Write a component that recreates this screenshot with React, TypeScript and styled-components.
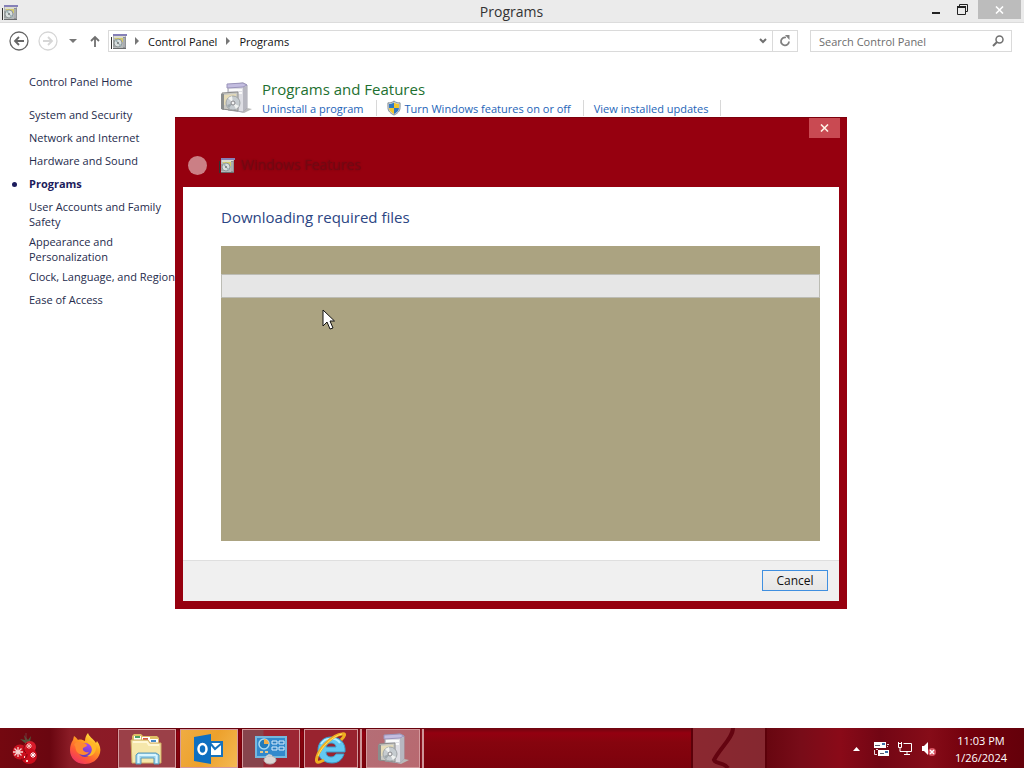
import React from "react";
import styled, { createGlobalStyle, css } from "styled-components";

const GlobalStyle = createGlobalStyle`
  * { box-sizing: border-box; }
  body {
    margin: 0;
    background: #ffffff;
    font-family: "Open Sans", "Noto Sans", sans-serif;
    font-size: 11px;
    line-height: 15px;
    color: #1e1e1e;
  }
  button, input { font: inherit; color: inherit; }
  button { padding: 0; border: 0; background: none; }
  a { text-decoration: none; color: inherit; }
  svg { display: block; flex: none; }
`;

const Desktop = styled.div`
  position: relative;
  min-height: 100vh;
  display: flex;
  flex-direction: column;
  overflow: hidden;
`;

const TitleBar = styled.header`
  display: flex;
  align-items: flex-start;
  height: 23px;
  padding-left: 2px;
  background: #ebebeb;
  border-bottom: 1px solid #dcdcdc;
`;

const TitleIcon = styled.div`
  flex: 1;
  padding-top: 4px;
`;

const WindowTitle = styled.h1`
  margin: 0;
  font-size: 14px;
  line-height: 23px;
  font-weight: 400;
  color: #333333;
`;

const WindowButtons = styled.div`
  flex: 1;
  display: flex;
  justify-content: flex-end;
  padding-right: 3px;
`;

const WindowButton = styled.button<{ $close?: boolean }>`
  display: flex;
  align-items: center;
  justify-content: center;
  width: ${(p) => (p.$close ? 43 : 26)}px;
  height: 19px;
  background: ${(p) => (p.$close ? "#bcbcbc" : "transparent")};
  margin-left: ${(p) => (p.$close ? 3 : 0)}px;
`;

const AddressBar = styled.nav`
  display: flex;
  align-items: center;
  height: 36px;
  padding: 0 12px 0 9px;
`;

const NavButton = styled.button<{ $width: number }>`
  display: flex;
  align-items: center;
  justify-content: center;
  width: ${(p) => p.$width}px;
  height: 22px;
`;

const UpButton = styled(NavButton)`
  padding-left: 4px;
`;

const PathBox = styled.div`
  flex: 1;
  display: flex;
  align-items: center;
  height: 22px;
  padding-left: 2px;
  border: 1px solid #dadada;
`;

const PathArrow = styled.span`
  margin-left: 8px;
`;

const Crumb = styled.a`
  padding: 0 9px 0 8px;
  color: #111111;
`;

const PathTools = styled.div`
  display: flex;
  margin-left: auto;
`;

const PathButton = styled.button`
  display: flex;
  align-items: center;
  justify-content: center;
  width: 25px;
  height: 20px;
  & + & { border-left: 1px solid #dadada; }
  &:first-child { width: 19px; }
`;

const SearchBox = styled.label`
  display: flex;
  align-items: center;
  width: 202px;
  height: 22px;
  margin-left: 12px;
  padding: 0 7px 0 8px;
  border: 1px solid #dadada;
`;

const SearchInput = styled.input`
  flex: 1;
  min-width: 0;
  padding: 0;
  border: 0;
  outline: 0;
  background: none;
  &::placeholder { color: #6d6d6d; opacity: 1; }
`;

const Content = styled.div`
  flex: 1;
  display: flex;
  padding-top: 15px;
`;

const Sidebar = styled.nav`
  width: 220px;
  padding-left: 29px;
  color: #252b4c;
`;

const HomeLink = styled.a`
  display: block;
  margin-bottom: 18px;
`;

const CategoryList = styled.ul`
  list-style: none;
  margin: 0;
  padding: 0;
`;

const Category = styled.li<{ $current?: boolean }>`
  display: flex;
  min-height: 23px;
  padding-bottom: 5px;
  white-space: nowrap;
  ${(p) =>
    p.$current &&
    css`
      margin-left: -17px;
      font-weight: 700;
      color: #1c1c5c;
      &::before {
        content: "";
        width: 5px;
        height: 5px;
        margin: 6px 12px 0 0;
        border-radius: 50%;
        background: currentColor;
      }
    `}
`;

const Main = styled.main`
  flex: 1;
  display: flex;
  align-items: flex-start;
  gap: 10px;
`;

const GroupIcon = styled.div`
  padding-top: 8px;
`;

const GroupTitle = styled.h2`
  margin: 6px 0 2px;
  font-size: 15px;
  line-height: 18px;
  font-weight: 400;
  color: #1e7030;
`;

const TaskLinks = styled.div`
  display: flex;
  align-items: center;
  color: #2464b8;
`;

const TaskLink = styled.a`
  display: flex;
  align-items: center;
  gap: 4px;
  height: 16px;
  padding-right: 12px;
  margin-right: 10px;
  border-right: 1px solid #d8d8d8;
  white-space: nowrap;
`;

const DialogLayer = styled.div`
  position: absolute;
  top: 117px;
  left: 0;
  right: 2px;
  display: flex;
  justify-content: center;
`;

const Dialog = styled.section`
  width: 672px;
  max-width: 100%;
  padding: 0 8px 8px;
  background: #96000f;
  border-top: 1px solid #7c000c;
`;

const DialogHeader = styled.header`
  display: flex;
  flex-direction: column;
  height: 69px;
`;

const DialogClose = styled.button`
  display: flex;
  align-items: center;
  justify-content: center;
  align-self: flex-end;
  width: 31px;
  height: 20px;
  margin-right: -1px;
  background: #c94a52;
`;

const DialogTitleRow = styled.div`
  display: flex;
  align-items: center;
  height: 20px;
  margin-top: 17px;
  padding-left: 5px;
`;

const DialogBack = styled.button`
  width: 19px;
  height: 19px;
  margin-right: 12px;
  border-radius: 50%;
  background: #cb7f85;
`;

const DialogTitle = styled.h2`
  margin: 0 0 0 6px;
  font-size: 14px;
  line-height: 20px;
  font-weight: 400;
  color: #740812;
  text-shadow: 0 0 2px #6c0410;
`;

const DialogBody = styled.div`
  padding: 19px 19px 19px 38px;
  background: #ffffff;
`;

const DialogHeading = styled.h3`
  margin: 0 0 18px;
  font-size: 15px;
  line-height: 22px;
  font-weight: 400;
  color: #2b4583;
`;

const ProgressPanel = styled.div`
  height: 295px;
  padding-top: 28px;
  background: #aba381;
`;

const ProgressTrack = styled.div`
  height: 24px;
  border: 1px solid #bcbcb4;
  background: #e6e6e6;
`;

const DialogFooter = styled.footer`
  display: flex;
  justify-content: flex-end;
  padding: 9px 11px 10px;
  border-top: 1px solid #dfdfdf;
  background: #f0f0f0;
`;

const CancelButton = styled.button`
  width: 66px;
  height: 21px;
  border: 1px solid #3f8fe0;
  background: linear-gradient(#f0f0f0, #e6e6e6);
  font-size: 12px;
  color: #111111;
`;

const Pointer = styled.div`
  position: absolute;
  left: 322px;
  top: 309px;
`;

const Taskbar = styled.footer`
  position: relative;
  display: flex;
  height: 40px;
  background:
    linear-gradient(90deg, #740810, #6a0610 50px, #8a1c26 70px, #8c1a26 120px, transparent 120px),
    linear-gradient(90deg, transparent 692px, #8b2830 693px, #852830 766px, #680610 767px, #780c18 800px, #8a0a18 840px, #720614 880px, #860c18 930px, #72000c 970px, #64000a 100%),
    linear-gradient(#6c0610 0, #940010 5px, #86040e 14px, #7c020c 100%);
`;

const TaskArt = styled.div`
  position: absolute;
  left: 690px;
  top: 0;
`;

const TaskButton = styled.button<{ $width: number; $tone?: string; $stacked?: boolean }>`
  display: flex;
  align-items: center;
  justify-content: center;
  width: ${(p) => p.$width}px;
  height: 39px;
  margin: 1px ${(p) => (p.$stacked ? 8 : 4)}px 0 0;
  ${(p) =>
    p.$tone &&
    css`
      border: 1px solid #d49a9e;
      outline: 1px solid #5c000860;
      background: ${p.$tone};
    `}
  ${(p) =>
    p.$stacked &&
    css`
      box-shadow: 2px 0 0 #8c1420, 4px 0 0 #cf9598;
    `}
`;

const Tray = styled.div`
  position: relative;
  display: flex;
  align-items: center;
  gap: 8px;
  margin-left: auto;
  padding: 2px 17px 0 0;
  color: #ffffff;
`;

const TrayIcons = styled.div`
  display: flex;
  gap: 8px;
  margin-left: 5px;
`;

const Clock = styled.time`
  margin-left: 10px;
  line-height: 17px;
  text-align: center;
  white-space: nowrap;
`;

const ProgramIcon = () => (
  <svg width="32" height="32" viewBox="0 0 32 32" aria-hidden="true">
    <path d="M27 26l5 1-8 4-4-1z" fill="#b9b9b9" />
    <path d="M8 3l15-2 4 2v23l-4 4-15-2z" fill="#dedee4" stroke="#a3a3ad" />
    <path d="M23 5l4-1v22l-4 4z" fill="#b7b7c0" />
    <path d="M7 2l16-1 4 2-4 2-16 1z" fill="#c3bde0" stroke="#9a94ba" />
    <path d="M9 8h13M9 11h13" stroke="#fafafa" strokeWidth="2" />
    <path d="M2 11l16-1v19L2 27z" fill="#cacac4" stroke="#8a8a8a" />
    <path d="M4 13l12-1v8L4 23z" fill="#e6dcb8" />
    <circle cx="13" cy="21" r="7" fill="#c6ccd0" stroke="#a0a5a8" />
    <path d="M13 21l-5-5 4-2zM13 21l6 3-3 3z" fill="#f1f3f1" />
    <path d="M13 21l-6 2 2 3z" fill="#9fa8ac" />
    <circle cx="13" cy="21" r="2" fill="#f4f4f4" stroke="#87878b" />
    <path d="M1 12v15l3 1V12z" fill="#8a8d8d" />
  </svg>
);

const SmallProgramIcon = () => (
  <svg width="16" height="16" viewBox="0 0 16 16" aria-hidden="true">
    <path d="M2 1h13v14H2z" fill="#b6b9ba" />
    <path d="M2 1h14v2H2z" fill="#8580b8" />
    <path d="M3 3h11v2H3z" fill="#dcdccf" />
    <path d="M4 5h8v4H4z" fill="#d3cb6a" />
    <path d="M2 7h3v7H2z" fill="#9ba0a0" />
    <circle cx="7" cy="10" r="4" fill="#d9dfdf" stroke="#8e9596" />
    <path d="M7 10l4 2-2 2zM7 10L4 8l2-2z" fill="#9fb4b8" />
    <circle cx="7" cy="10" r="1" fill="#6d7272" />
    <path d="M12 4h3v11h-3z" fill="#8f9296" />
    <path d="M13 5v9" stroke="#c8cacc" />
    <path d="M2 15.500h13" stroke="#6a6c6e" />
    <path d="M0.500 4v12" stroke="#333333" />
  </svg>
);

const CrumbArrow = () => (
  <svg width="5" height="8" viewBox="0 0 5 8" aria-hidden="true">
    <path d="M0 0l4 4-4 4z" fill="#777777" />
  </svg>
);

const CloseGlyph = ({ color }: { color: string }) => (
  <svg width="9" height="8" viewBox="0 0 9 8" aria-hidden="true">
    <path d="M1 0.500l7 7M8 0.500l-7 7" stroke={color} strokeWidth="1.600" />
  </svg>
);

const RoundArrow = ({ color, flip }: { color: string; flip?: boolean }) => (
  <svg width="20" height="20" viewBox="0 0 20 20" fill="none" stroke={color} aria-hidden="true">
    <circle cx="10" cy="10" r="9" strokeWidth="1.300" />
    <path
      d={flip ? "M5 10h9M10 6l4 4-4 4" : "M15 10H6M10 6l-4 4 4 4"}
      strokeWidth="1.800"
    />
  </svg>
);

const Shield = () => (
  <svg width="14" height="16" viewBox="0 0 15 16" aria-hidden="true">
    <path d="M7.500 0.500C5 2.500 3 2.500 1 2.500v5c0 4 3 6.500 6.500 8 3.500-1.500 6.500-4 6.500-8v-5c-2 0-4 0-6.500-2z" fill="#cfd5da" stroke="#7f8a92" />
    <path d="M7.500 2C5.500 3.500 4 3.800 2.200 3.800V8h5.300z" fill="#2e76c4" />
    <path d="M7.500 2c2 1.500 3.500 1.800 5.300 1.800V8H7.500z" fill="#f2c62f" />
    <path d="M2.200 8h5.300v6.300C4.500 12.800 2.400 11 2.200 8z" fill="#f2c62f" />
    <path d="M7.500 8h5.300c-0.200 3-2.300 4.800-5.300 6.300z" fill="#2e76c4" />
  </svg>
);

const Ornament = () => (
  <svg width="30" height="36" viewBox="0 0 30 36" aria-hidden="true">
    <path d="M14 12l-5-4 5 1-1-5 4 5 3-4-1 6 3-1-5 4z" fill="#4d5a3c" />
    <path d="M15 2v9" stroke="#75343a" />
    <circle cx="9" cy="21" r="7.500" fill="#c9121f" />
    <circle cx="19" cy="16" r="6" fill="#d81c2b" />
    <circle cx="18" cy="25" r="8" fill="#cb0d1b" />
    <path d="M16 12c-4 3-4 8-1 10M10 28c3 1 6-1 6-5" stroke="#7e0610" fill="none" />
    <path d="M7 16v10M2 21h10M3.500 17.500l7 7M10.500 17.500l-7 7" stroke="#f6d5d2" strokeWidth="1.300" />
    <path d="M18 12v6M15 15h6M16 13l4 4M20 13l-4 4" stroke="#f4c2bc" />
    <path d="M22 21v6M19 24h6M20 22l4 4M24 22l-4 4" stroke="#ffffff" />
    <path d="M15 30h2M13 26h1" stroke="#f7d5d0" strokeWidth="2" />
  </svg>
);

const Firefox = () => (
  <svg width="32" height="34" viewBox="0 0 32 34" aria-hidden="true">
    <defs>
      <linearGradient id="fox" x1="0.850" y1="0" x2="0.200" y2="1">
        <stop offset="0" stopColor="#fff44f" />
        <stop offset="0.350" stopColor="#ffa71e" />
        <stop offset="0.700" stopColor="#ff5a35" />
        <stop offset="1" stopColor="#ee2f6a" />
      </linearGradient>
      <linearGradient id="foxglobe" x1="0.700" y1="0" x2="0.300" y2="1">
        <stop offset="0" stopColor="#a949f2" />
        <stop offset="1" stopColor="#5b3bb8" />
      </linearGradient>
    </defs>
    <path d="M19 1c1 4 5 5 8 10l1-2c3 4 4 8 3 12-2 7-8 11-15 11C7 32 1 26 1 18c0-4 1-7 3-10l1-4c2 1 3 3 4 4 2-1 5 0 7 1 0-3 1-6 3-8z" fill="url(#fox)" />
    <circle cx="16" cy="18" r="7" fill="url(#foxglobe)" />
    <path d="M5 13c2-4 6-4 9-2 2 0 4 1 4 3l-4 2c-1 3 3 5 6 4-2 4-9 4-12 0-2-3-1-6-3-7z" fill="#ff8a30" />
    <path d="M18 8c-1 3 5 4 5 9 0 3-2 6-5 7 5 1 9-3 9-8 0-5-4-7-9-8z" fill="#ffb728" />
  </svg>
);

const Explorer = () => (
  <svg width="34" height="32" viewBox="0 0 34 32" aria-hidden="true">
    <path d="M2 3l2-2h7l2 2h14l2 2v23H3z" fill="#dfbd65" />
    <path d="M4 3h7v5H4z" fill="#fdfdfd" />
    <path d="M5 3h5v2H5z" fill="#4d9f62" />
    <path d="M12 4h8v6h-8z" fill="#ffffff" />
    <path d="M13 5h5v2h-5z" fill="#d85745" />
    <path d="M20 6h8v6h-8z" fill="#ffffff" />
    <path d="M21 7h5v2h-5z" fill="#4789c7" />
    <path d="M1 7h17l2 3h11v20H2z" fill="#f5e7ab" stroke="#d0ae62" />
    <path d="M3 9h14l2 3h10" fill="none" stroke="#fff7d4" strokeWidth="2" />
    <path d="M6 31V22l2-2h18l3 2v9h-5v-6H11v6z" fill="#9bd3ec" stroke="#5b9aba" />
    <path d="M8 22h18M8.500 22v8M26.500 22v8" stroke="#d9f5ff" strokeWidth="2" />
  </svg>
);

const Outlook = () => (
  <svg width="32" height="32" viewBox="0 0 32 32" aria-hidden="true">
    <path d="M17 9h12v14H17z" fill="#ffffff" stroke="#1772bd" strokeWidth="2" />
    <path d="M17 10l5 6 7-6" fill="none" stroke="#1772bd" strokeWidth="2" />
    <path d="M1 4l17-3v30L1 28z" fill="#0e6fc0" />
    <ellipse cx="9.500" cy="16" rx="4" ry="5" fill="none" stroke="#ffffff" strokeWidth="2.500" />
  </svg>
);

const ControlPanel = () => (
  <svg width="32" height="32" viewBox="0 0 32 32" aria-hidden="true">
    <rect x="1" y="4" width="30" height="20" fill="#3289cc" stroke="#74b8de" strokeWidth="2" />
    <circle cx="9" cy="11" r="5" fill="#247bb9" stroke="#a9daf2" strokeWidth="1.500" />
    <path d="M9 11V6a5 5 0 015 5z" fill="#f4ae48" />
    <path d="M17 8h5v3h-5zM24 8h5v3h-5zM17 14h5v3h-5zM24 14h5v3h-5z" fill="#2a7dbd" stroke="#d9efff" />
    <path d="M5 19h3M10 19h3" stroke="#e6c98a" strokeWidth="2" />
    <ellipse cx="15" cy="27" rx="6" ry="4" fill="#dad5d4" stroke="#b3aeae" />
    <path d="M11 24l3-2 3 1" fill="none" stroke="#d2cfce" strokeWidth="2" />
  </svg>
);

const InternetExplorer = () => (
  <svg width="34" height="34" viewBox="0 0 34 34" aria-hidden="true">
    <path
      fillRule="evenodd"
      d="M17 5c-8 0-13 6-13 13 0 8 6 13 14 13 6 0 10-3 12-9h-8c-1 2-3 3-5 3-3 0-5-2-5-5h19C32 11 26 5 17 5zM12 15c1-3 3-4 5-4s5 1 5 4z"
      fill="#62c8f2"
      stroke="#3a9dcc"
    />
    <path d="M7 12c4-7 15-7 19-1" fill="none" stroke="#b5edff" strokeWidth="2" />
    <path d="M27 8c4-4 5-7 1-6C19 3 6 15 3 25c-2 7 2 6 7 3" fill="none" stroke="#efad20" strokeWidth="3" />
    <path d="M28 2C19 4 7 15 4 24" fill="none" stroke="#ffe56b" />
  </svg>
);

const TrayMail = () => (
  <svg width="16" height="16" viewBox="0 0 16 16" aria-hidden="true">
    <path d="M1 1h12v6H1z" fill="#ffffff" />
    <path d="M5 9h11v6H5z" fill="#ffffff" />
    <path d="M2 4.500h5M7 12.500h4" stroke="#5a5e72" />
    <path d="M9 2h3v2H9zM12 10h3v2h-3z" fill="#3e71aa" />
    <path d="M1.500 9v4.500H4M3 8.500h2M14 3.500h2M14 5.500h1" fill="none" stroke="#e8d5da" />
  </svg>
);

const TrayNetwork = () => (
  <svg width="16" height="16" viewBox="0 0 16 16" fill="none" stroke="#ffffff" aria-hidden="true">
    <path d="M6.500 2.500h8v8h-9M7 13.500h6M10 10.500v3" />
    <path d="M1.500 2.500h3v4h-3zM3 7v3.500h3M1.500 1v2M4.500 1v2" />
  </svg>
);

const TrayVolume = () => (
  <svg width="16" height="16" viewBox="0 0 16 16" aria-hidden="true">
    <path d="M1 5h2l4-4v13l-4-4H1z" fill="#ffffff" />
    <circle cx="11" cy="11" r="4" fill="#d65260" />
    <path d="M9 9l4 4M13 9l-4 4" stroke="#ffffff" strokeWidth="1.500" />
  </svg>
);

const categories: { label: React.ReactNode; key: string; current?: boolean }[] = [
  { key: "system", label: "System and Security" },
  { key: "network", label: "Network and Internet" },
  { key: "hardware", label: "Hardware and Sound" },
  { key: "programs", label: "Programs", current: true },
  { key: "users", label: <>User Accounts and Family<br />Safety</> },
  { key: "appearance", label: <>Appearance and<br />Personalization</> },
  { key: "clock", label: "Clock, Language, and Region" },
  { key: "ease", label: "Ease of Access" },
];

export default function App() {
  return (
    <Desktop>
      <GlobalStyle />
      <TitleBar>
        <TitleIcon><SmallProgramIcon /></TitleIcon>
        <WindowTitle>Programs</WindowTitle>
        <WindowButtons>
          <WindowButton aria-label="Minimize">
            <svg width="8" height="8" viewBox="0 0 8 8"><path d="M0 6h8v2H0z" fill="#222222" /></svg>
          </WindowButton>
          <WindowButton aria-label="Restore">
            <svg width="11" height="11" viewBox="0 0 11 11" fill="none" stroke="#222222">
              <path d="M2.500 3V0.500h8v7H9" />
              <path d="M0.500 3v7.500h8V3" />
              <path d="M0 3h9" strokeWidth="2" />
            </svg>
          </WindowButton>
          <WindowButton $close aria-label="Close"><CloseGlyph color="#ffffff" /></WindowButton>
        </WindowButtons>
      </TitleBar>

      <AddressBar aria-label="Address">
        <NavButton $width={20} aria-label="Back"><RoundArrow color="#666666" /></NavButton>
        <NavButton $width={38} aria-label="Forward"><RoundArrow color="#d6d6d6" flip /></NavButton>
        <NavButton $width={11} aria-label="Recent locations">
          <svg width="8" height="4" viewBox="0 0 8 4"><path d="M0 0h8L4 4z" fill="#777777" /></svg>
        </NavButton>
        <UpButton $width={30} aria-label="Up">
          <svg width="10" height="12" viewBox="0 0 10 12" fill="none" stroke="#707070" strokeWidth="1.800">
            <path d="M5 12V2M1 6l4-4 4 4" />
          </svg>
        </UpButton>
        <PathBox>
          <SmallProgramIcon />
          <PathArrow><CrumbArrow /></PathArrow>
          <Crumb href="#control-panel">Control Panel</Crumb>
          <CrumbArrow />
          <Crumb href="#programs">Programs</Crumb>
          <PathTools>
            <PathButton aria-label="Previous locations">
              <svg width="8" height="6" viewBox="0 0 8 6" fill="none" stroke="#707070" strokeWidth="2"><path d="M1 1l3 3 3-3" /></svg>
            </PathButton>
            <PathButton aria-label="Refresh">
              <svg width="12" height="12" viewBox="0 0 12 12" fill="none" stroke="#808080" strokeWidth="1.800">
                <path d="M7 2.500A4 4 0 1010 6.500" />
                <path d="M6 0h4.500v5z" fill="#808080" stroke="none" />
              </svg>
            </PathButton>
          </PathTools>
        </PathBox>
        <SearchBox>
          <SearchInput type="text" placeholder="Search Control Panel" aria-label="Search Control Panel" />
          <svg width="12" height="12" viewBox="0 0 12 12" fill="none" stroke="#707070" aria-hidden="true">
            <circle cx="7.500" cy="4.500" r="3.500" strokeWidth="1.500" />
            <path d="M5 7l-4 4" strokeWidth="2" />
          </svg>
        </SearchBox>
      </AddressBar>

      <Content>
        <Sidebar aria-label="Control Panel categories">
          <HomeLink href="#home">Control Panel Home</HomeLink>
          <CategoryList>
            {categories.map((c) => (
              <Category key={c.key} $current={c.current}>
                <a href={`#${c.key}`}>{c.label}</a>
              </Category>
            ))}
          </CategoryList>
        </Sidebar>
        <Main>
          <GroupIcon><ProgramIcon /></GroupIcon>
          <div>
            <GroupTitle>Programs and Features</GroupTitle>
            <TaskLinks>
              <TaskLink href="#uninstall">Uninstall a program</TaskLink>
              <TaskLink href="#features"><Shield />Turn Windows features on or off</TaskLink>
              <TaskLink href="#updates">View installed updates</TaskLink>
            </TaskLinks>
          </div>
        </Main>
      </Content>

      <Taskbar>
        <TaskArt>
          <svg width="80" height="40" viewBox="0 0 80 40" fill="none" aria-hidden="true">
            <path d="M43 0C43 10 30 20 24 32c1 4 10 2 14 8" stroke="#640410" strokeWidth="4" />
            <path d="M2 0v40M76 0v40" stroke="#5c0009" strokeWidth="2" />
          </svg>
        </TaskArt>
        <TaskButton $width={52} aria-label="Start"><Ornament /></TaskButton>
        <TaskButton $width={58} aria-label="Firefox"><Firefox /></TaskButton>
        <TaskButton $width={58} $tone="#9b4048" aria-label="File Explorer"><Explorer /></TaskButton>
        <TaskButton $width={58} $tone="linear-gradient(120deg, #efac42, #eda12c 50%, #f4b954)" aria-label="Outlook"><Outlook /></TaskButton>
        <TaskButton $width={58} $tone="linear-gradient(90deg, #87444c 20px, #9c2734 21px)" aria-label="Control Panel"><ControlPanel /></TaskButton>
        <TaskButton $width={54} $tone="#99232f" $stacked aria-label="Internet Explorer"><InternetExplorer /></TaskButton>
        <TaskButton $width={54} $tone="linear-gradient(120deg, #b46e76, #b86970)" $stacked aria-label="Programs and Features"><ProgramIcon /></TaskButton>
        <Tray>
          <svg width="7" height="4" viewBox="0 0 7 4" aria-hidden="true"><path d="M3.500 0L7 4H0z" fill="#ffffff" /></svg>
          <TrayIcons><TrayMail /><TrayNetwork /><TrayVolume /></TrayIcons>
          <Clock>11:03 PM<br />1/26/2024</Clock>
        </Tray>
      </Taskbar>

      <DialogLayer>
        <Dialog role="dialog" aria-labelledby="dialog-title">
          <DialogHeader>
            <DialogClose aria-label="Close"><CloseGlyph color="#fff3e6" /></DialogClose>
            <DialogTitleRow>
              <DialogBack aria-label="Back" />
              <SmallProgramIcon />
              <DialogTitle id="dialog-title">Windows Features</DialogTitle>
            </DialogTitleRow>
          </DialogHeader>
          <DialogBody>
            <DialogHeading>Downloading required files</DialogHeading>
            <ProgressPanel>
              <ProgressTrack role="progressbar" aria-label="Download progress" />
            </ProgressPanel>
          </DialogBody>
          <DialogFooter>
            <CancelButton>Cancel</CancelButton>
          </DialogFooter>
        </Dialog>
      </DialogLayer>

      <Pointer>
        <svg width="13" height="21" viewBox="0 0 13 21" aria-hidden="true">
          <path d="M1 1v16l4-4 3 7 3-1-3-7h4.500z" fill="#ffffff" stroke="#111111" />
        </svg>
      </Pointer>
    </Desktop>
  );
}
